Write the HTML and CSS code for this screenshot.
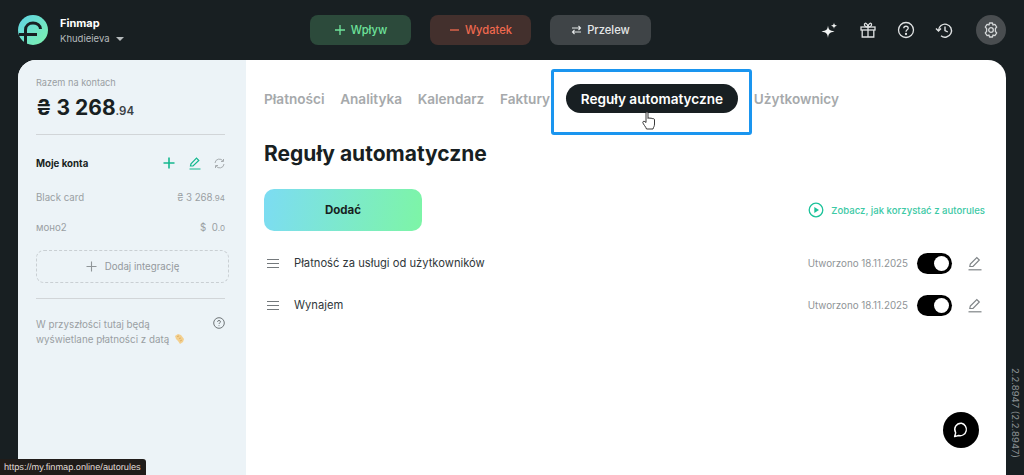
FILE: index.html
```html
<!DOCTYPE html>
<html lang="en">
<head>
    <meta charset="UTF-8">
    <meta name="viewport" content="width=device-width, initial-scale=1.0">
    <title>Finmap - Reguły automatyczne</title>
    <link rel="stylesheet" href="styles.css">
</head>
<body>
    <!-- Top bar -->
    <header class="topbar">
        <div class="brand">
            <svg class="logo" width="30" height="30" viewBox="0 0 30 30">
                <defs>
                    <linearGradient id="logo-grad" x1="0" y1="0" x2="1" y2="1">
                        <stop offset="0" stop-color="#5fd3e6"/>
                        <stop offset="1" stop-color="#7df2ad"/>
                    </linearGradient>
                </defs>
                <circle cx="15" cy="15" r="15" fill="url(#logo-grad)"/>
                <path d="M7.5 29V15C7.5 10.500 11 8 15 8C19 8 22.500 10.500 22.500 14" fill="none" stroke="#181f22" stroke-width="3"/>
                <path d="M1 19.500H19" stroke="#181f22" stroke-width="3"/>
            </svg>
            <div class="brand-text">
                <div class="brand-name">Finmap</div>
                <div class="brand-user">Khudieieva <span class="caret"></span></div>
            </div>
        </div>
        <div class="actions">
            <button class="action action-in">
                <svg width="12" height="12" viewBox="0 0 12 12"><path d="M6 1V11M1 6H11" stroke="currentColor" stroke-width="1.300"/></svg>
                Wpływ
            </button>
            <button class="action action-out">
                <svg width="11" height="12" viewBox="0 0 11 12"><path d="M1 6H10" stroke="currentColor" stroke-width="1.300"/></svg>
                Wydatek
            </button>
            <button class="action action-move">
                <svg width="11" height="10" viewBox="0 0 11 10"><path d="M1 3H9.500M7.500 1L9.500 3L7.500 5M10 7H1.500M3.500 5L1.500 7L3.500 9" fill="none" stroke="currentColor" stroke-width="1.100"/></svg>
                Przelew
            </button>
        </div>
        <div class="tools">
            <svg class="tool tool-spark" width="18" height="18" viewBox="0 0 18 18"><path d="M8 4.500C8.500 8.500 9.500 9.500 14.500 10.500C9.500 11.500 8.500 12.500 8 17C7.500 12.500 6.500 11.500 1.500 10.500C6.500 9.500 7.500 8.500 8 4.500ZM14 1.500C14.200 3.500 14.800 4.100 17 4.800C14.800 5.500 14.200 6 14 8C13.800 6 13.200 5.500 11 4.800C13.200 4.100 13.800 3.500 14 1.500Z" fill="#f2f4f4"/></svg>
            <svg class="tool" width="18" height="18" viewBox="0 0 18 18" fill="none" stroke="#dfe2e3" stroke-width="1.300"><rect x="2" y="6" width="14" height="3"/><path d="M3.200 9V16H14.800V9M9 6V16M9 6C7 6 5 5 5.500 3C6 1.500 8.500 2 9 6ZM9 6C11 6 13 5 12.500 3C12 1.500 9.500 2 9 6Z"/></svg>
            <svg class="tool" width="18" height="18" viewBox="0 0 18 18" fill="none" stroke="#dfe2e3" stroke-width="1.300"><circle cx="9" cy="9" r="7.500"/><path d="M6.800 7.200C6.800 4.600 11.200 4.600 11.200 7.200C11.200 8.900 9 8.800 9 10.700"/><circle cx="9" cy="13" r=".5" fill="#dfe2e3"/></svg>
            <svg class="tool" width="18" height="18" viewBox="0 0 18 18" fill="none" stroke="#dfe2e3" stroke-width="1.400"><path d="M3.500 9.500A6.500 6.500 0 1 1 6 14.800"/><path d="M1 7.500L3.500 10L6 7.500"/><path d="M10 5.500V9.500L12.800 11"/></svg>
            <div class="gear">
                <svg width="16" height="16" viewBox="0 0 16 16" fill="none" stroke="#d5d8d9" stroke-width="1.300"><path d="M6.500 1H9.500L10 3L11.900 2.400L13.700 5L12.400 6.600L12.400 9.400L13.700 11L11.900 13.600L10 13L9.500 15H6.500L6 13L4.100 13.600L2.300 11L3.600 9.400L3.600 6.600L2.300 5L4.100 2.400L6 3Z" stroke-linejoin="round"/><circle cx="8" cy="8" r="2.300"/></svg>
            </div>
        </div>
    </header>

    <div class="shell">
        <!-- Accounts sidebar -->
        <aside class="sidebar">
            <div class="total-label">Razem na kontach</div>
            <div class="total">₴ 3 268<small>.94</small></div>
            <hr class="line">
            <div class="accounts-head">
                <span class="accounts-title">Moje konta</span>
                <svg class="head-plus" width="12" height="12" viewBox="0 0 12 12"><path d="M6 0.500V11.500M0.500 6H11.500" stroke="#14b88f" stroke-width="1.600"/></svg>
                <svg class="head-edit" width="12" height="13" viewBox="0 0 12 13" fill="none" stroke="#14b88f" stroke-width="1.200"><path d="M1.500 9L2 6.800L7.500 1.200L9.800 3.500L4 9Z"/><path d="M0.500 12H11.500"/></svg>
                <svg class="head-sync" width="11" height="11" viewBox="0 0 11 11" fill="none" stroke="#a6abae" stroke-width="1"><path d="M1 5A4.300 4.300 0 0 1 9 3.200M10 6A4.300 4.300 0 0 1 2 7.800M9.500 1V3.500H7M1.500 10V7.500H4"/></svg>
            </div>
            <div class="account">
                <span>Black card</span>
                <span class="amount">₴ 3 268<small>.94</small></span>
            </div>
            <div class="account">
                <span>моно2</span>
                <span class="amount">$ &nbsp;0<small>.0</small></span>
            </div>
            <div class="integration">
                <svg width="11" height="11" viewBox="0 0 11 11"><path d="M5.500 0.500V10.500M0.500 5.500H10.500" stroke="#8f9598" stroke-width="1.100"/></svg>
                Dodaj integrację
            </div>
            <hr class="line line-low">
            <div class="hint">
                <p>W przyszłości tutaj będą wyświetlane płatności z datą
                    <svg class="hand" width="11" height="12" viewBox="0 0 11 12"><path d="M1 3L4 1L7 2L10 6L9 9L6 11L4 8L2 6Z" fill="#f3cf8e"/><path d="M3 3.500L5 3M5 5.500L7 5M6 8L8 7" stroke="#d9a85c" stroke-width=".8"/></svg>
                </p>
                <svg class="hint-icon" width="12" height="12" viewBox="0 0 12 12" fill="none" stroke="#6e7477" stroke-width="1"><circle cx="6" cy="6" r="5.300"/><path d="M4.500 4.800C4.500 3 7.500 3 7.500 4.800C7.500 5.900 6 5.800 6 7"/><path d="M6 8.300V9.100"/></svg>
            </div>
        </aside>

        <!-- Main content -->
        <main class="content">
            <nav class="tabs">
                <span class="tab">Płatności</span>
                <span class="tab">Analityka</span>
                <span class="tab">Kalendarz</span>
                <span class="tab">Faktury</span>
                <span class="tab tab-active">Reguły automatyczne</span>
                <span class="tab">Użytkownicy</span>
            </nav>
            <h1 class="title">Reguły automatyczne</h1>
            <div class="toolbar">
                <button class="add">Dodać</button>
                <div class="howto">
                    <svg width="16" height="16" viewBox="0 0 16 16"><circle cx="8" cy="8" r="6.800" fill="none" stroke="#1cc29a" stroke-width="1.300"/><path d="M6.300 5L11 8L6.300 11Z" fill="#1cc29a"/></svg>
                    Zobacz, jak korzystać z autorules
                </div>
            </div>
            <ul class="rules">
                <li class="rule">
                    <span class="burger"></span>
                    <span class="rule-name">Płatność za usługi od użytkowników</span>
                    <span class="rule-date">Utworzono 18.11.2025</span>
                    <span class="toggle"></span>
                    <svg class="rule-edit" width="14" height="15" viewBox="0 0 14 15" fill="none" stroke="#7f8487" stroke-width="1.200"><path d="M1.800 10.500L2.300 8L8.800 1.500L11.300 4L5 10.500Z"/><path d="M0.500 13.800H13.500"/></svg>
                </li>
                <li class="rule">
                    <span class="burger"></span>
                    <span class="rule-name">Wynajem</span>
                    <span class="rule-date">Utworzono 18.11.2025</span>
                    <span class="toggle"></span>
                    <svg class="rule-edit" width="14" height="15" viewBox="0 0 14 15" fill="none" stroke="#7f8487" stroke-width="1.200"><path d="M1.800 10.500L2.300 8L8.800 1.500L11.300 4L5 10.500Z"/><path d="M0.500 13.800H13.500"/></svg>
                </li>
            </ul>
        </main>
    </div>

    <!-- Overlays -->
    <div class="highlight"></div>
    <svg class="pointer" width="14" height="19" viewBox="0 0 14 19"><path d="M4 9V2C4 0.700 6 0.700 6 2V7.500C6 6.500 8 6.500 8 7.700C8 6.800 10 6.800 10 8C10 7.300 12.500 7.300 12.500 8.800V13C12.500 15.500 11.500 16 11 18H4.500C4 16 1 13 0.800 11.500C0.800 10 2.500 9.800 4 11.500Z" fill="#fff" stroke="#222" stroke-width=".9" stroke-linejoin="round"/></svg>
    <div class="chat">
        <svg width="18" height="18" viewBox="0 0 18 18" fill="none" stroke="#fff" stroke-width="1.400"><path d="M9.500 2.200A6.300 6.300 0 1 1 6.600 14.500L2.600 15.600L3.700 11.800A6.300 6.300 0 0 1 9.500 2.200Z" stroke-linejoin="round"/></svg>
    </div>
    <div class="version">2.2.8947 (2.2.8947)</div>
    <div class="status">https://my.finmap.online/autorules</div>
</body>
</html>
```
FILE: styles.css
```css
* {
    box-sizing: border-box;
}

html, body {
    height: 100%;
}

body {
    margin: 0;
    font-family: 'Inter', 'Liberation Sans', sans-serif;
    background-color: #181f22;
    color: #181f22;
    display: flex;
    flex-direction: column;
    overflow: hidden;
    position: relative;
}

button {
    font-family: inherit;
    border: none;
    cursor: pointer;
}

/* Top bar */
.topbar {
    height: 60px;
    flex-shrink: 0;
    padding: 0 18px;
    display: flex;
    align-items: center;
}

.brand {
    width: 292px;
    display: flex;
    align-items: center;
    gap: 12px;
}

.brand-name {
    margin-top: 2px;
    font-size: 11px;
    font-weight: 700;
    color: #fff;
    line-height: 14px;
}

.brand-user {
    margin-top: 2px;
    font-size: 9.500px;
    color: #b5babc;
    line-height: 14px;
    display: flex;
    align-items: center;
    gap: 6px;
}

.caret {
    border-left: 4px solid transparent;
    border-right: 4px solid transparent;
    border-top: 4px solid #b5babc;
}

.actions {
    display: flex;
    gap: 19px;
}

.action {
    width: 101px;
    height: 30px;
    border-radius: 8px;
    font-size: 11.200px;
    font-weight: 500;
    display: flex;
    align-items: center;
    justify-content: center;
    gap: 5px;
}

.action-in {
    background-color: #2c4a3b;
    color: #6fe39b;
}

.action-out {
    background-color: #43302d;
    color: #f0694f;
}

.action-move {
    background-color: #3f4447;
    color: #e4e7e8;
}

.tools {
    margin-left: auto;
    display: flex;
    align-items: center;
}

.tool {
    margin-right: 20px;
}

.tool-spark {
    margin-right: 21px;
}

.gear {
    width: 30px;
    height: 30px;
    margin-left: 3px;
    border-radius: 50%;
    background-color: #494d50;
    display: flex;
    align-items: center;
    justify-content: center;
}

/* Shell */
.shell {
    flex: 1;
    margin: 0 18px;
    display: flex;
    background-color: #fff;
    border-radius: 18px 18px 0 0;
    overflow: hidden;
}

/* Sidebar */
.sidebar {
    width: 228px;
    flex-shrink: 0;
    background-color: #ecf3f7;
    padding: 16px 21px 0 18px;
}

.total-label {
    font-size: 9.200px;
    line-height: 13px;
    color: #9a9fa3;
}

.total {
    margin-top: 5px;
    font-size: 21px;
    font-weight: 700;
    line-height: 28px;
    color: #181f22;
    white-space: nowrap;
}

.total small {
    font-size: 11.500px;
    font-weight: 600;
    color: #3a4144;
}

.line {
    margin: 9px 0 0;
    border: none;
    border-top: 1px solid #d1d5d8;
}

.line-low {
    margin-top: 15px;
}

.accounts-head {
    margin-top: 20px;
    height: 16px;
    display: flex;
    align-items: center;
}

.accounts-title {
    font-size: 9.700px;
    font-weight: 700;
    width: 127px;
}

.head-plus {
    margin-right: 14px;
}

.head-edit {
    margin-right: 13px;
}

.account {
    margin-top: 14px;
    height: 16px;
    display: flex;
    justify-content: space-between;
    align-items: center;
    font-size: 9.700px;
    color: #9a9fa3;
}

.accounts-head + .account {
    margin-top: 18px;
}

.amount {
    white-space: nowrap;
}

.amount small {
    font-size: 8px;
}

.integration {
    margin: 15px -4px 0 0;
    height: 33px;
    border: 1px dashed #c9cfd3;
    border-radius: 8px;
    display: flex;
    align-items: center;
    justify-content: center;
    gap: 8px;
    font-size: 9.700px;
    color: #94999d;
}

.hint {
    margin-top: 18px;
    display: flex;
    justify-content: space-between;
    align-items: flex-start;
    font-size: 9.800px;
    line-height: 15px;
    color: #9a9fa3;
}

.hint p {
    margin: 0;
    width: 165px;
}

.hand {
    vertical-align: -2px;
    margin-left: 2px;
}

.hint-icon {
    margin-top: 0;
    flex-shrink: 0;
}

/* Content */
.content {
    flex: 1;
    padding: 24px 21px 0 18px;
}

.tabs {
    height: 29px;
    display: flex;
    align-items: center;
    gap: 15.700px;
    white-space: nowrap;
}

.tab {
    font-size: 13.600px;
    font-weight: 600;
    color: #a6a9ab;
}

.tab-active {
    height: 29px;
    padding: 0 15px;
    border-radius: 15px;
    background-color: #181f22;
    color: #fff;
    display: flex;
    align-items: center;
}

.title {
    margin: 27px 0 0;
    font-size: 21px;
    font-weight: 700;
    line-height: 27px;
}

.toolbar {
    margin-top: 22px;
    display: flex;
    justify-content: space-between;
    align-items: center;
}

.add {
    width: 158px;
    height: 42px;
    border-radius: 10px;
    background: linear-gradient(100deg, #7cdcf3, #7df5a6);
    font-size: 11.500px;
    font-weight: 700;
    color: #181f22;
}

.howto {
    display: flex;
    align-items: center;
    gap: 7px;
    font-size: 9.600px;
    font-weight: 500;
    color: #3cc9a5;
}

.rules {
    list-style-type: none;
    margin: 11px 0 0;
    padding: 0 3px 0 0;
}

.rule {
    height: 42px;
    display: flex;
    align-items: center;
    font-size: 11.200px;
    color: #30373a;
}

.burger {
    width: 12px;
    height: 9px;
    margin: 0 15px 0 3px;
    border-top: 1px solid #74797c;
    border-bottom: 1px solid #74797c;
    position: relative;
}

.burger::after {
    content: "";
    position: absolute;
    left: 0;
    right: 0;
    top: 3px;
    height: 1px;
    background-color: #74797c;
}

.rule-name {
    flex: 1;
}

.rule-date {
    font-size: 9.800px;
    color: #8f9497;
    margin-right: 9px;
}

.toggle {
    width: 35px;
    height: 21px;
    border-radius: 11px;
    background-color: #000;
    position: relative;
    margin-right: 16px;
}

.toggle::after {
    content: "";
    position: absolute;
    right: 3px;
    top: 3px;
    width: 15px;
    height: 15px;
    border-radius: 50%;
    background-color: #fff;
}

/* Overlays */
.highlight {
    position: absolute;
    left: 551px;
    top: 69px;
    width: 201px;
    height: 66px;
    border: 3px solid #1a95ef;
    border-radius: 3px;
}

.pointer {
    position: absolute;
    left: 642px;
    top: 111px;
}

.chat {
    position: absolute;
    left: 943px;
    top: 412px;
    width: 36px;
    height: 36px;
    border-radius: 50%;
    background-color: #000;
    display: flex;
    align-items: center;
    justify-content: center;
}

.version {
    position: absolute;
    left: 1009px;
    top: 368px;
    writing-mode: vertical-rl;
    font-size: 9.500px;
    line-height: 12px;
    color: #888e91;
    white-space: nowrap;
}

.status {
    position: absolute;
    left: 0;
    bottom: 0;
    width: 146px;
    height: 16px;
    padding-left: 4px;
    background-color: #201c1a;
    border-radius: 0 3px 0 0;
    font-family: 'Liberation Sans', sans-serif;
    font-size: 9.200px;
    text-rendering: geometricPrecision;
    line-height: 16px;
    color: #e0dcd8;
    white-space: nowrap;
}
```
